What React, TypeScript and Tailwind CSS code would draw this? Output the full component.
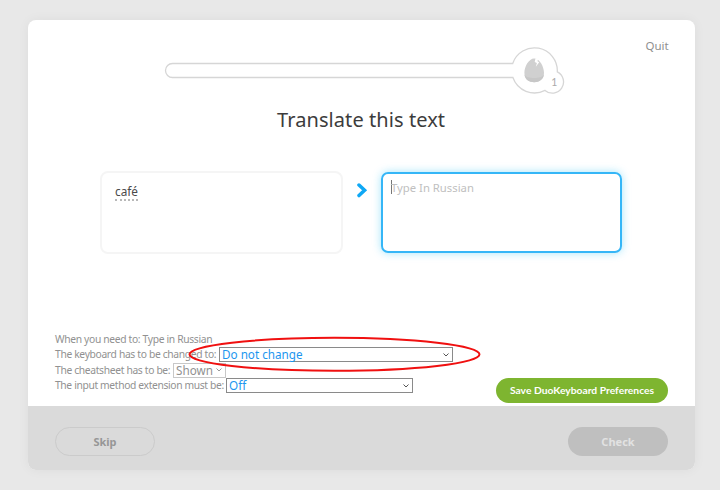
import React from "react";

function Progress() {
  return (
    <svg width="402" height="50" viewBox="164 46 402 50" fill="none" className="block">
      <path
        d="M512.7 63.5H172.5a7 7 0 0 0 0 14H512.9A22.9 22.9 0 0 0 545 90.4A11.2 11.2 0 1 0 557.3 71.9A22.9 22.9 0 0 0 512.7 63.5Z"
        stroke="#d6d6d6"
        strokeWidth="1.3"
      />
      <path d="M534.2 58.5c5.4 0 9.8 8.2 9.8 14.2 0 5.6-4 9.5-9.8 9.5s-9.8-3.9-9.8-9.5c0-6 4.4-14.2 9.8-14.2Z" fill="#d0d0d0" />
      <path d="M524.4 74.5c2 4.500 17 5 19.600 0-.6 4.600-4.400 7.700-9.800 7.700s-9.200-2.700-9.800-7.700Z" fill="#c7c7c7" />
      <path d="M535.500 58.200l-.8 3.900 2.200.9-1.100 3.800 3.400-4.600-1.700-.9.6-2.600Z" fill="#fff" />
      <text x="554.2" y="86" textAnchor="middle" fontSize="10.5" fill="#aaa" className="font-['Lato',sans-serif]">1</text>
    </svg>
  );
}

function Select({ value, className, arrow }: { value: string; className: string; arrow: string }) {
  return (
    <div className={`flex h-[15px] items-center justify-between border bg-white pl-[2px] pr-[3px] ${className}`}>
      <span className="whitespace-nowrap text-[11.7px] leading-[13px]">{value}</span>
      <svg width="6" height="4" viewBox="0 0 6 4" fill="none" className="shrink-0">
        <path d="M.5.5 3 3 5.500.5" stroke={arrow} strokeWidth="1" />
      </svg>
    </div>
  );
}

export default function App() {
  return (
    <div className="flex h-[490px] w-[720px] bg-[#e8e8e8] pl-7 pt-5 font-['Noto_Sans',sans-serif]">
      <div className="flex h-[450px] w-[667px] flex-col overflow-hidden rounded-[8px] bg-white shadow-[0_0_12px_rgba(0,0,0,0.05)]">
        <header className="flex h-[84px] shrink-0 items-start pl-[136px] pt-[26px]">
          <Progress />
          <span className="ml-[79.5px] mt-[-9px] text-[11.5px] leading-[18px] text-[#8f8f8f]">Quit</span>
        </header>

        <h1 className="h-[67px] shrink-0 whitespace-nowrap pl-[249px] text-[20px] leading-[32px] tracking-[0.08px] text-[#3c3c3c]">
          Translate this text
        </h1>

        <main className="flex h-[159px] shrink-0 items-start pl-[72px]">
          <div className="flex h-[83px] w-[243px] items-start rounded-[8px] border-2 border-[#f5f5f5] px-[13px] pt-[10px]">
            <span className="border-b-2 border-dotted border-[#b8b8b8] text-[11.8px] leading-[16px] text-[#4a4a4a]">café</span>
          </div>
          <svg width="12" height="16" viewBox="0 0 12 16" fill="none" className="ml-[13px] mt-[11px]">
            <path d="M3 3 8.600 8.300 3 13.600" stroke="#0fa8f5" strokeWidth="3.500" strokeLinecap="round" />
          </svg>
          <div className="ml-[13px] mt-[1px] flex h-[81px] w-[241px] items-start rounded-[7px] border-2 border-[#35b6f7] pl-[8px] pt-[6px] shadow-[0_0_8px_rgba(28,190,246,0.4)]">
            <span className="h-[14px] w-px bg-[#777]" />
            <span className="-ml-px text-[11.3px] leading-[15px] text-[#c0c0c0]">Type In Russian</span>
          </div>
        </main>

        <section className="relative flex h-[76px] shrink-0 items-start pl-[27px] text-[10.3px] leading-[15px] text-[#919191]">
          <div className="flex w-[441px] flex-col gap-[0.4px] pt-[2px]">
            <div className="whitespace-nowrap tracking-[-0.34px]">When you need to: Type in Russian</div>
            <div className="flex">
              <span className="w-[164px] whitespace-nowrap tracking-[-0.34px]">The keyboard has to be changed to:</span>
              <Select value="Do not change" className="w-[234px] border-[#8a8a8a] text-[#1c96ef]" arrow="#555" />
            </div>
            <div className="flex">
              <span className="w-[118px] whitespace-nowrap tracking-[-0.34px]">The cheatsheet has to be:</span>
              <Select value="Shown" className="w-[53px] border-[#c8c8c8] text-[#919191]" arrow="#999" />
            </div>
            <div className="flex">
              <span className="w-[171px] whitespace-nowrap tracking-[-0.36px]">The input method extension must be:</span>
              <Select value="Off" className="w-[187px] border-[#8a8a8a] text-[#1c96ef]" arrow="#555" />
            </div>
          </div>
          <button className="mt-[48px] h-[25px] w-[172px] whitespace-nowrap rounded-full bg-[#7eb530] pb-px text-center font-['Lato',sans-serif] text-[10.3px] font-bold leading-[23px] text-white">
            Save DuoKeyboard Preferences
          </button>
          <svg width="294" height="38" viewBox="0 0 294 38" fill="none" className="pointer-events-none absolute left-[160px] top-[5px]">
            <ellipse cx="146.500" cy="19.300" rx="145" ry="16.500" stroke="#f01010" strokeWidth="2" />
          </svg>
        </section>

        <footer className="flex h-[64px] shrink-0 items-start justify-between bg-[#dadada] px-[27px] pt-[21px] text-[11px] font-bold">
          <button className="h-[29px] w-[100px] rounded-full border border-[#cbcbcb] leading-[26px] text-[#969696]">Skip</button>
          <button className="h-[29px] w-[100px] rounded-full bg-[#bfbfbf] leading-[27px] text-[#e2e2e2]">Check</button>
        </footer>
      </div>
    </div>
  );
}
